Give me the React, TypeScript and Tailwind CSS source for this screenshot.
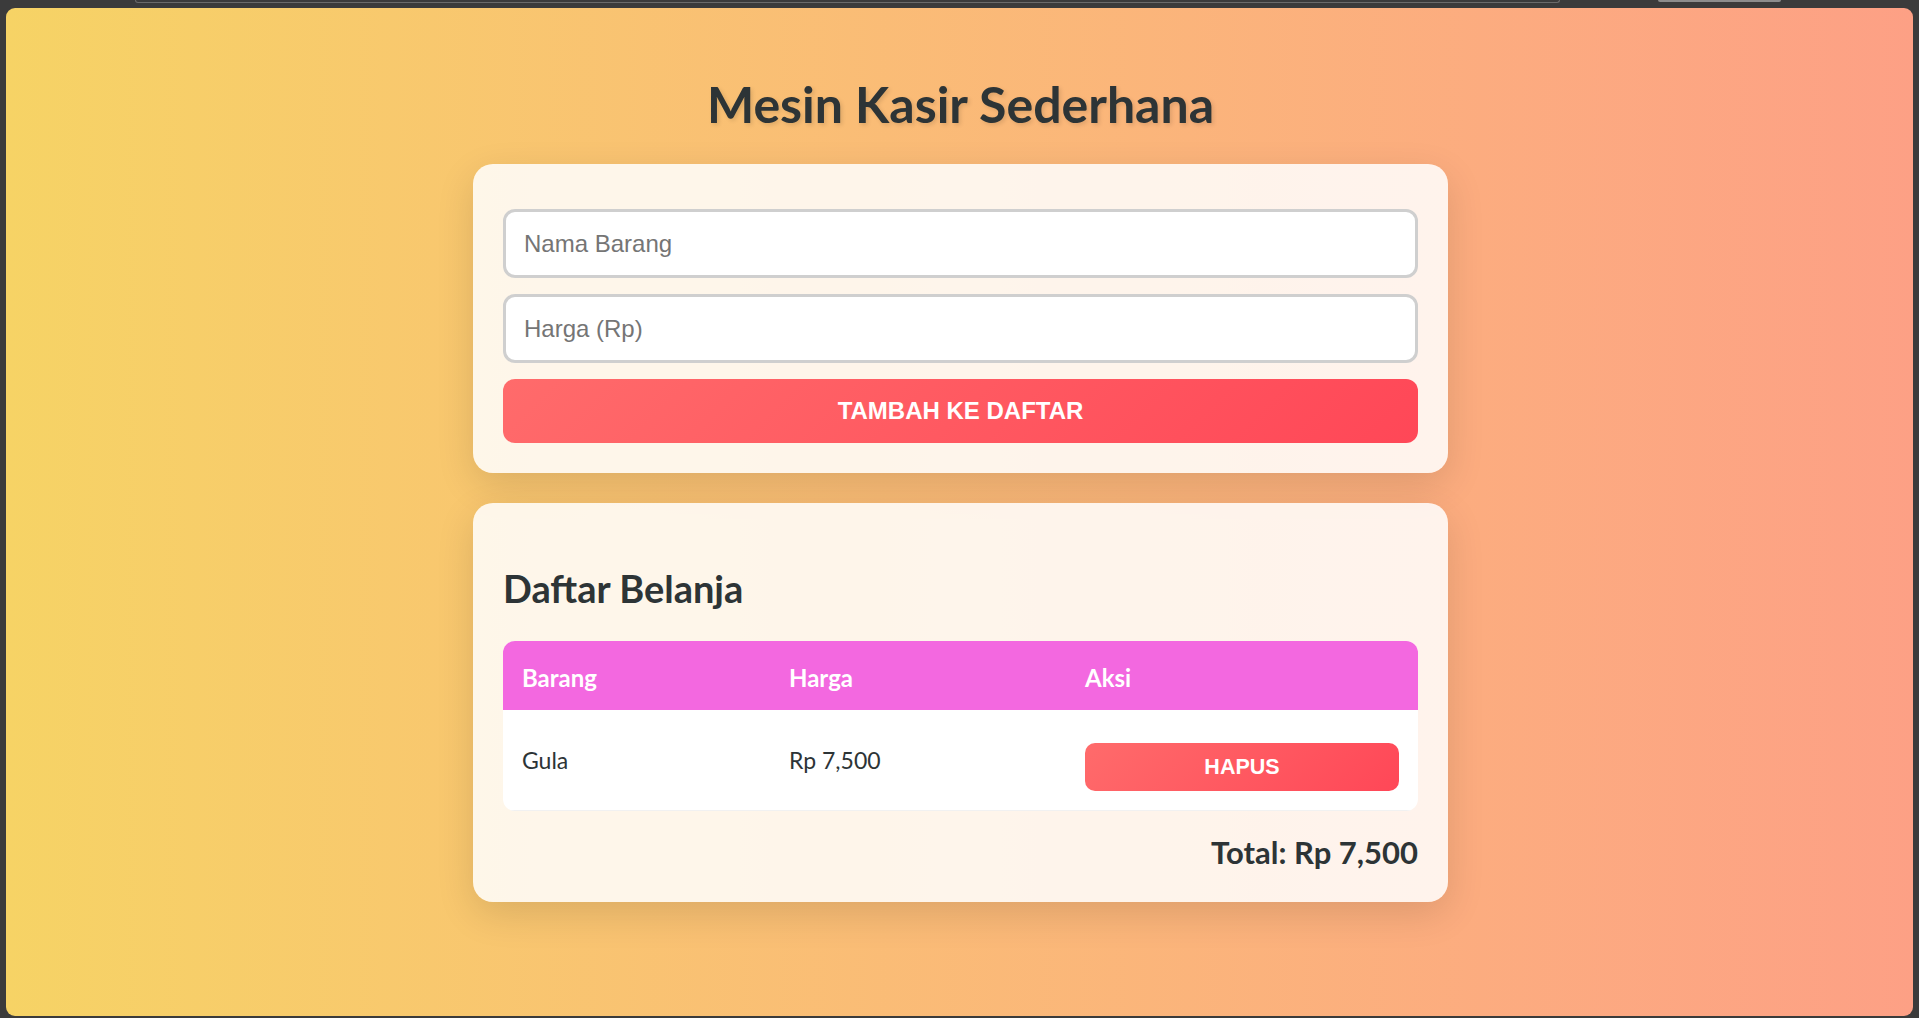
import { useState } from "react";

type Item = {
  id: number;
  nama: string;
  harga: number;
};

const rupiah = (n: number) => "Rp " + n.toLocaleString("en-US");

export default function App() {
  const [nama, setNama] = useState("");
  const [harga, setHarga] = useState("");
  const [items, setItems] = useState<Item[]>([{ id: 1, nama: "Gula", harga: 7500 }]);

  const tambah = () => {
    const h = parseInt(harga, 10);
    if (!nama.trim() || isNaN(h)) return;
    setItems([...items, { id: Date.now(), nama: nama.trim(), harga: h }]);
    setNama("");
    setHarga("");
  };

  const hapus = (id: number) => {
    setItems(items.filter((i) => i.id !== id));
  };

  const total = items.reduce((sum, i) => sum + i.harga, 0);

  return (
    <div className="h-[1018px] bg-[#3b3b3b] flex flex-col overflow-hidden">
      {/* browser chrome leftovers */}
      <div className="h-[8px] flex items-start">
        <div className="ml-[135px] w-[1425px] h-[3px] border-b border-x border-[#6b6b6b] rounded-b-[4px]" />
        <div className="ml-[98px] w-[123px] h-[2px] bg-[#8c8c8c] rounded-b-[2px]" />
      </div>

      <div className="flex-1 mx-[6px] mb-[2px] rounded-[9px] overflow-hidden bg-gradient-to-r from-[#f6d365] to-[#fda085] flex flex-col items-center pt-[66px] font-['Lato','Noto_Sans',sans-serif]">
        <h1 className="ml-[2px] text-[50px] leading-[60px] font-bold text-[#2d3436] [text-shadow:2px_2px_4px_rgba(0,0,0,0.12)]">
          Mesin Kasir Sederhana
        </h1>

        <div className="ml-[2px] mt-[30px] w-[975px] bg-white/85 rounded-[20px] shadow-[0_12px_38px_rgba(0,0,0,0.12)] pt-[45px] px-[30px] pb-[30px] flex flex-col gap-[16px]">
          <input
            value={nama}
            onChange={(e) => setNama(e.target.value)}
            placeholder="Nama Barang"
            className="h-[69px] w-full bg-white border-[3px] border-[#cfcfcf] rounded-[12px] px-[18px] text-[24px] font-['Liberation_Sans',Arial,sans-serif] text-[#2d3436] placeholder:text-[#757575] outline-none"
          />
          <input
            value={harga}
            onChange={(e) => setHarga(e.target.value)}
            placeholder="Harga (Rp)"
            type="text"
            className="h-[69px] w-full bg-white border-[3px] border-[#cfcfcf] rounded-[12px] px-[18px] text-[24px] font-['Liberation_Sans',Arial,sans-serif] text-[#2d3436] placeholder:text-[#757575] outline-none"
          />
          <button
            onClick={tambah}
            className="h-[64px] w-full rounded-[12px] bg-[linear-gradient(135deg,#ff6b6b,#ff4757)] text-white text-[24px] font-bold uppercase font-['Liberation_Sans',Arial,sans-serif]"
          >
            Tambah ke Daftar
          </button>
        </div>

        <div className="ml-[2px] mt-[30px] w-[975px] bg-white/85 rounded-[20px] shadow-[0_12px_38px_rgba(0,0,0,0.12)] pt-[64px] px-[30px] pb-[33px]">
          <h2 className="text-[38px] leading-[43px] font-bold text-[#2d3436]">
            Daftar Belanja
          </h2>

          <div className="mt-[31px] rounded-[12px] overflow-hidden bg-white">
            <table className="w-full table-fixed border-collapse">
              <colgroup>
                <col className="w-[267px]" />
                <col className="w-[296px]" />
                <col className="w-[352px]" />
              </colgroup>
              <thead>
                <tr className="h-[69px] bg-[#f368e0] text-white text-left">
                  <th className="px-[19px] pt-[4px] text-[24px] font-bold">Barang</th>
                  <th className="px-[19px] pt-[4px] text-[24px] font-bold">Harga</th>
                  <th className="px-[19px] pt-[4px] text-[24px] font-bold">Aksi</th>
                </tr>
              </thead>
              <tbody>
                {items.map((item) => (
                  <tr key={item.id} className="h-[100px] border-b border-[#f1f1f1] text-[#2d3436]">
                    <td className="px-[19px] text-[23px]">{item.nama}</td>
                    <td className="px-[19px] text-[23px]">{rupiah(item.harga)}</td>
                    <td className="px-[19px]">
                      <button
                        onClick={() => hapus(item.id)}
                        className="mt-[14px] h-[48px] w-full rounded-[10px] bg-[linear-gradient(135deg,#ff6b6b,#ff4757)] text-white text-[21.5px] font-bold uppercase font-['Liberation_Sans',Arial,sans-serif]"
                      >
                        Hapus
                      </button>
                    </td>
                  </tr>
                ))}
              </tbody>
            </table>
          </div>

          <div className="mt-[24px] text-right text-[31px] leading-[34px] font-bold text-[#2d3436]">
            Total: {rupiah(total)}
          </div>
        </div>
      </div>
    </div>
  );
}
